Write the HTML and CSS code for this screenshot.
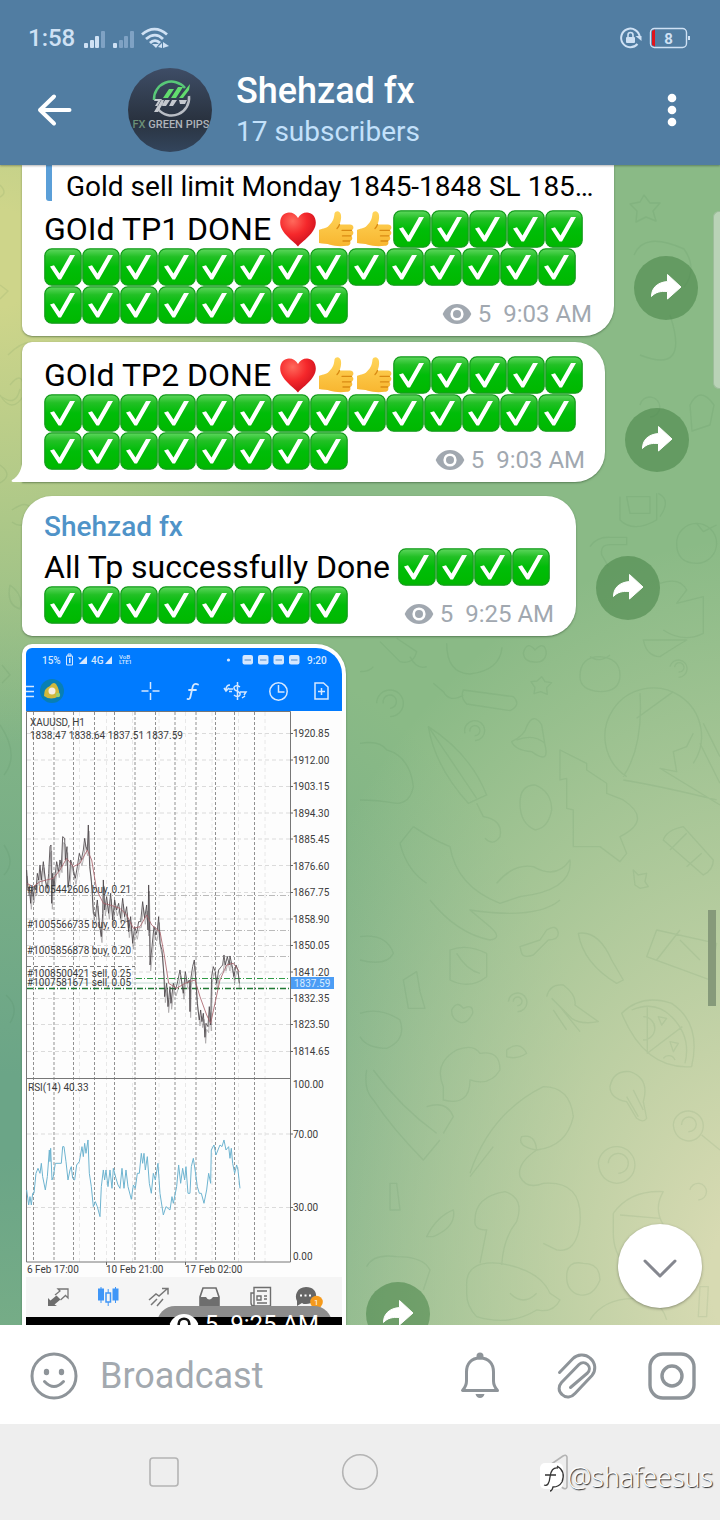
FILE: index.html
```html
<!DOCTYPE html>
<html lang="en">
<head>
    <meta charset="UTF-8">
    <meta name="viewport" content="width=device-width, initial-scale=1.0">
    <title>Shehzad fx</title>
    <link rel="stylesheet" href="styles.css">
</head>
<body>

    <!-- Shared icons -->
    <svg class="sprite" width="0" height="0" aria-hidden="true">
        <defs>
            <linearGradient id="green" x1="0" y1="0" x2="0" y2="1">
                <stop offset="0" stop-color="#5fd75f"/>
                <stop offset=".22" stop-color="#22c025"/>
                <stop offset=".5" stop-color="#00bd08"/>
                <stop offset="1" stop-color="#00b800"/>
            </linearGradient>
            <radialGradient id="red" cx=".35" cy=".25" r=".8">
                <stop offset="0" stop-color="#ff6a5c"/>
                <stop offset=".5" stop-color="#f5282b"/>
                <stop offset="1" stop-color="#c80d1c"/>
            </radialGradient>
            <linearGradient id="skin" x1="0" y1="0" x2="0" y2="1">
                <stop offset="0" stop-color="#ffd55a"/>
                <stop offset="1" stop-color="#f8b630"/>
            </linearGradient>
        </defs>
        <symbol id="emoji-check" viewBox="0 0 38 38">
            <rect x=".8" y=".8" width="36.4" height="36.4" rx="7" fill="url(#green)" stroke="#149c1c" stroke-width="1.2"/>
            <path d="M6 18.500l4-1.300 5.500 8.300L26 7h5L17 31.500h-2.500z" fill="#fff"/>
        </symbol>
        <symbol id="emoji-heart" viewBox="0 0 38 38">
            <path d="M19 36.5C15 31 1.2 23.500 1.200 12.500 1.200 6 5.500 2.500 10 2.500c4 0 7.200 2 9 5.500 1.800-3.500 5-5.500 9-5.500 4.500 0 8.800 3.500 8.800 10C36.800 23.500 23 31 19 36.500z" fill="url(#red)"/>
        </symbol>
        <symbol id="emoji-thumb" viewBox="0 0 38 38">
            <path d="M2 20c2-1.500 7-1 10-4.500 4-4 5-7 5.500-12C18.500.500 23 0 24 5c.500 3.500-.500 7-1.500 9.500H33c4 0 4.500 5 1.500 5.800 2.800 1 2.300 5-.500 5.600 2.200 1.300 1.500 4.600-1.200 5.100 1.500 1.700.500 4.700-2.800 4.800-6 .700-13 .400-17-1-3-1.500-7-1-11-1.800z" fill="url(#skin)"/>
            <path d="M34.500 20.300H25M34 25.900h-8.500M32.800 31H26M22.500 14.500c-.5 1.500-1.500 3-2.500 4" fill="none" stroke="#d98a12" stroke-width="1.300" stroke-linecap="round"/>
        </symbol>
        <symbol id="icon-eye" viewBox="0 0 30 22">
            <path d="M15 1C8 1 3 5.500.700 11 3 16.500 8 21 15 21s12-4.500 14.300-10C27 5.500 22 1 15 1z" fill="currentColor"/>
            <circle class="eye-ring" cx="15" cy="11" r="6.600"/>
            <circle cx="15" cy="11" r="4" fill="currentColor"/>
        </symbol>
        <symbol id="icon-share" viewBox="0 0 64 64">
            <path d="M47 31L33.500 18.500v7C22 26.500 17.500 33 17.500 40.500c4-4.500 9-5.500 16-5V43z" fill="#fff" stroke="#fff" stroke-linejoin="round"/>
        </symbol>
    </svg>

    <header class="header">
        <div class="status">
            <span class="status-time">1:58</span>
            <svg class="status-signal" viewBox="0 0 88 24" aria-hidden="true">
                <g fill="#cfe1f4">
                    <rect x="3" y="17" width="4" height="5" rx="1"/>
                    <rect x="9" y="14" width="4" height="8" rx="1"/>
                    <rect x="14" y="10" width="4" height="12" rx="1"/>
                    <rect x="32" y="17" width="4" height="5" rx="1"/>
                </g>
                <g fill="#7fa2c4">
                    <rect x="20" y="5" width="4" height="17" rx="1"/>
                    <rect x="38" y="14" width="4" height="8" rx="1"/>
                    <rect x="43" y="10" width="4" height="12" rx="1"/>
                    <rect x="49" y="5" width="4" height="17" rx="1"/>
                </g>
                <g fill="none" stroke="#cfe1f4" stroke-width="2.800">
                    <path d="M61 8.500c8-7 17-7 25 0M65 13c6-5 12-5 17 0M69 17c3-3 7-3 10 0"/>
                </g>
                <path d="M71 18l4 4 3-4zM77 21l4-4v5zM82 16l6 4-6 2z" fill="#cfe1f4"/>
            </svg>
            <svg class="status-battery" viewBox="0 0 72 24" aria-hidden="true">
                <path d="M19.500 18A9.300 9.300 0 1 1 21.700 11" fill="none" stroke="#cfe1f4" stroke-width="2"/>
                <path d="M17.500 10h6v5z" fill="#cfe1f4"/>
                <rect x="8" y="11" width="9" height="6" rx="1" fill="#cfe1f4"/>
                <path d="M10 12V9a2.500 2.500 0 0 1 5 0V12" fill="none" stroke="#cfe1f4" stroke-width="1.600"/>
                <rect x="32.500" y="2.500" width="36" height="19" rx="4" fill="none" stroke="#cfe1f4" stroke-width="1.400"/>
                <path d="M34 5l3-1.500v17L34 19z" fill="#e0131b"/>
                <rect x="70" y="10" width="2" height="4" fill="#cfe1f4"/>
                <text x="50.500" y="17.500" text-anchor="middle" class="battery-text">8</text>
            </svg>
        </div>
        <div class="toolbar">
            <button class="icon-btn back" aria-label="Back">
                <svg viewBox="0 0 48 48"><path d="M39.500 24H10M24 10.500L10 24l14 13.500" fill="none" stroke="#fff" stroke-width="4" stroke-linecap="round" stroke-linejoin="round"/></svg>
            </button>
            <svg class="avatar" viewBox="0 0 84 84" role="img" aria-label="Shehzad fx">
                <defs>
                    <linearGradient id="av" x1="0" y1="0" x2="0" y2="1">
                        <stop offset="0" stop-color="#3e4d66"/>
                        <stop offset=".62" stop-color="#29323f"/>
                        <stop offset="1" stop-color="#33455c"/>
                    </linearGradient>
                    <clipPath id="avc"><circle cx="42" cy="42" r="42"/></clipPath>
                </defs>
                <g clip-path="url(#avc)">
                    <rect width="84" height="84" fill="url(#av)"/>
                    <path d="M26 32a17.500 17.500 0 0 1 31-12" fill="none" stroke="#58c878" stroke-width="2.500"/>
                    <path d="M61 28a17.500 17.500 0 0 1-31 13" fill="none" stroke="#b9bdc4" stroke-width="2.500"/>
                    <path d="M35 30l6-9h5l-6 9zM43 30l7-11h5l-7 11zM51 30l11-14-1 6-6 8z" fill="#62dc6e"/>
                    <path d="M27 31h7l-4 7h-3l3-5h-4zM36 32h6l-4 6h-4zM44 32h5l-4 6h-4zM33 32l-7 12h4l7-12zM51 32h8l-2 4h-5z" fill="#c5c9cf"/>
                    <text x="43" y="60" text-anchor="middle" class="avatar-text"><tspan fill="#6b8f78">FX</tspan> GREEN PIPS</text>
                </g>
            </svg>
            <div class="title">
                <h1>Shehzad fx</h1>
                <p>17 subscribers</p>
            </div>
            <button class="icon-btn" aria-label="More options">
                <svg viewBox="0 0 48 48" fill="#fff"><circle cx="24" cy="12" r="4.300"/><circle cx="24" cy="24" r="4.300"/><circle cx="24" cy="36" r="4.300"/></svg>
            </button>
        </div>
    </header>

    <main class="chat">
        <svg class="doodles" viewBox="0 0 720 1160" preserveAspectRatio="xMinYMin slice" aria-hidden="true">
            <g transform="translate(360 325) scale(.3333)">
                <path d="M780 20v70q40 40 110 0V10M800 20h70v50h-60zM895 10q40 20 5 70M950 160a60 60 0 1 1 60 60q-60 0-60-60M1010 100l20 25 40-20M690 170q20-30 60-28h50v22h-50q-30 0-25 30l20 35M900 280q60-20 80 20l-30 40 80-20v110q-60 30-120-10M850 450q10 50 50 50 30-20 80-50z"/>
                <path d="M260 460q0 90 70 92 90-10 96-80M490 490q10-40 35-10 30-30 34 10-5 30-36 26-30 0-33-26zM660 560q0-60 60-60 60 5 60 55t-60 50q-60-5-60-45M690 500q30 20 60-5"/>
                <path d="M930 530a26 26 0 1 1 26 32M944 532a14 14 0 1 1 12 14M310 600l150 20q25 25-10 42l-130-20q-20-20-10-42zM310 615q-40 25-60-10l-30-25M545 560l10 15 20 3-15 15 2 20-20-8-20 6 3-18-12-18 18-2z"/>
                <path d="M50 640a40 40 0 1 1 40 40M70 640a20 20 0 1 1 20 15M0 545q30 0 40-15M60 455l60 60q40 10 50-30l-60-40M150 500q20 40 50 30"/>
                <path d="M205 710q20 120 120 230l55-25Q330 790 205 710zM205 710l145 215M350 940l20 40q60 10 50 60-20 30-45 5M315 730a30 30 0 1 1 30 22M330 725a15 15 0 1 1 14 12"/>
                <path d="M455 755q40-20 45-45 20-45 45-5l10 60q15 60-40 20-50-5-60-30zM470 750q50-20 85 10M600 780v90l20-5v90l20 5v110h80l60 45 20-25-20-50q100-50 10-110l-50-20v-30l-60-40v-20zM480 940q0-55 45-55 50 20 50 75-10 55-50 60-45-20-45-80z"/>
                <path d="M800 860a145 145 0 1 1 200-40M840 610q10 160-50 250M940 605l-110 80M790 870q120 20 280 60M1000 730l-20 40-40 15 10 60-50-10 180 110M1030 700l50 100M1020 760l60 120"/>
                <path d="M0 760q60-10 80 20 70 20 80 110-10 50-50 50-60-10-110-10M120 1060q20 80 80 120M160 1010l-40 50M160 1010q60 40 110 60 20 120 150 170l60-20q160-20 150-110-40 60-110 20-60-10-110 50M910 1050q10-30 60-40l90 100q0 30-30 45zM930 1080l50-50M980 1130l45-40M820 1140l15 15 25-5-5 25 10 15-25 5-15-10z"/>
            </g>
            <g transform="translate(360 735) scale(.3333)">
                <path d="M210 0q80 100 180 120 40-5 0-40l-60-50q200 30 270-30M480 140l60-20 20-30q30-20 35 10 0 20-30 20l-45 45q-30 10-35-5zM270 150q50-20 110 10v70q-50 40-110 10zM290 160q30 50 70 60M655 100q60-10 100 80l35 60-20 10q-100-60-115-150z"/>
                <path d="M890 90l180 40-20 110-190-70zM960 90l-70 90M960 120l60 60M445 305a28 28 0 1 1 28 30M460 305a13 13 0 1 1 12 12M275 330q15-30 35-5 30-15 28 15-15 30-35 28-30-10-28-38zM560 290q10-40 50-35 40 30 35 60l70 50q-50 10-80-10l-60-60M580 330l40 60M600 320l60 75"/>
                <path d="M785 340q60-60 150-30 90 60 60 190-140 10-210-160zM815 330q70-30 120 20 60 60 40 140M862 320v140l105-80M850 350a30 30 0 1 1-1 70M930 425l25 5-15 25zM895 350l25 5-15 20zM910 475a20 20 0 0 1 35 5"/>
                <path d="M0 110q80-10 100 50-20 40-100 20M130 240l40-25 10 60 15 50h-50zM0 340q60-20 120 20 20 60-40 85-60 0-80-35M20 510q-10 60 20 90 60 90 150 180l50-60M40 510q80 110 190 190M200 620q60-20 80 30l-30 50M250 560q-30-70 40-110 50-20 70 10 60-10 60 50-30 50-90 30 0 80-80 60zM440 450q40-30 60 10-30 20-60 10z"/>
                <path d="M330 820q60-180 220-260 80 0 90 90-20 90-110 100-60-10-45-40 40-10 45 40-60 40-50 80 20 40 70 20 120-10 110 120-10 90-70 80-40-20-40-20M330 830l70-90M345 960q0-70 90-85 60 20 35 90-40 50-45 130M360 1090l20-100q-40 0-35-30M320 1160q-5-80 100-70 120 20 150 90l30 20q-20 40-70 30-80 50-180 20-30-30-30-70zM450 1180q40 40 80 0"/>
                <path d="M750 560q10-50 60-45 60 20 40 90l10 50q-10 15-30 0l-30-50q-50-10-50-45zM800 590l35 60M820 570l30 60M715 790a55 55 0 1 1 55 60q-50-5-55-60M745 790a30 30 0 1 1 30 30M940 675a45 45 0 1 1 45 48q-40-5-45-48M965 675a22 22 0 1 1 20 20M1025 705l55 45M990 870a25 25 0 1 1 25 30M760 940q50-70 150-65-30 50 0 100M760 940v60q0 60 40 100M780 945l120 10M620 1130q0-50 50-40 50 0 50 50-20 50-60 45-40-10-40-55zM20 1100q20-40 90-30 80 0 100 40l-20 60M200 1010q30-60 80-80 10 50-60 80zM90 850h20l10 80H90zM690 1260q50-80 180-60 40 20 50 60M1020 1160h25l-5 90h-25z"/>
            </g>
            <path d="M0 20q8 8 0 12M0 120l8 6-8 8M8 190q18-18 30-10M10 220q14-18 14 10-12 20-24 0M2 232q14 10 18-8M0 300q14 10 0 18M12 345q20-14 20 8-10 12-20 4M10 420q14 10 10 24-14-4-10-24M2 500l8 10-8 8M0 560q20 30 4 50M4 680q12 18 0 30M6 830q14 12 4 28M644 30l6 8 10 0-7 8 3 10-10-4-10 5 1-11-7-7 10-2zM634 90q10-24 50-6 14 20 0 38M640 190q50 20 30-40M640 240a10 10 0 1 1 10 12M690 240q10-20 24 0l-4 20-18 6z"/>
        </svg>

        <section class="messages">
            <div class="row">
                <article class="bubble bubble-cut">
                    <blockquote class="quote">Gold sell limit Monday 1845-1848 SL 185…</blockquote>
                    <div class="body">
                        <p class="text">GOId TP1 DONE ❤👍👍✅✅✅✅✅✅✅✅✅✅✅✅✅✅✅✅✅✅✅✅✅✅✅✅✅✅✅</p>
                        <div class="meta"><svg><use href="#icon-eye"/></svg><span>5</span><time>9:03 AM</time></div>
                    </div>
                </article>
                <button class="share" aria-label="Share"><svg><use href="#icon-share"/></svg></button>
            </div>

            <div class="row row-last">
                <article class="bubble bubble-tail">
                    <div class="body">
                        <p class="text">GOId TP2 DONE ❤👍👍✅✅✅✅✅✅✅✅✅✅✅✅✅✅✅✅✅✅✅✅✅✅✅✅✅✅✅</p>
                        <div class="meta"><svg><use href="#icon-eye"/></svg><span>5</span><time>9:03 AM</time></div>
                    </div>
                    <svg class="tail" viewBox="0 0 12 26" aria-hidden="true"><path d="M12 0C11 14 8 20 1 24c-1 1 0 2 1 2h10z" fill="#fff"/></svg>
                </article>
                <button class="share" aria-label="Share"><svg><use href="#icon-share"/></svg></button>
            </div>

            <div class="row">
                <article class="bubble bubble-first">
                    <h2 class="name">Shehzad fx</h2>
                    <div class="body">
                        <p class="text">All Tp successfully Done ✅✅✅✅✅✅✅✅✅✅✅✅</p>
                        <div class="meta"><svg><use href="#icon-eye"/></svg><span>5</span><time>9:25 AM</time></div>
                    </div>
                </article>
                <button class="share" aria-label="Share"><svg><use href="#icon-share"/></svg></button>
            </div>

            <div class="row">
                <article class="bubble bubble-photo">
                    <svg class="photo" viewBox="26 648 316 710" role="img" aria-label="XAUUSD chart">
                        <rect x="26" y="648" width="316" height="710" fill="#fdfdfd"/>
                        <rect x="26" y="648" width="316" height="63" fill="#007bff"/>
                        <g class="p-status">
                            <text x="42" y="664">15%</text>
                            <text x="91" y="664">4G</text>
                            <text x="307" y="664">9:20</text>
                            <text x="119" y="659" class="p-tiny">VoB</text>
                            <text x="119" y="664" class="p-tiny">LTE1</text>
                        </g>
                        <g fill="#d5e8ff">
                            <path d="M66.500 656h6v9h-6zM68 654h3v2h-3z" fill="none" stroke="#d5e8ff"/>
                            <path d="M69 658h1.500v5H69zM87 656v8h-8zM82 658l-4-1 2 3zM112 656v8h-7z"/>
                            <circle cx="228.500" cy="660" r="1.600"/>
                            <rect x="242.500" y="655" width="10.500" height="9.500" rx="2"/>
                            <rect x="258" y="655" width="10.500" height="9.500" rx="2"/>
                            <rect x="273.500" y="655" width="10.500" height="9.500" rx="2"/>
                            <rect x="289" y="655" width="10.500" height="9.500" rx="2"/>
                            <path d="M244.500 660h6.500M260 660h6.500M275.500 660h6.500M291 660h6.500" stroke="#7fa9dc" stroke-width="1.500"/>
                        </g>
                        <g fill="none" stroke="#d5e8ff" stroke-width="1.500">
                            <path d="M26 686.500h8M26 691.500h8M26 696.500h8M150.500 682v7M150.500 693v7M141.500 691h7M152.500 691h7"/>
                            <circle cx="278.500" cy="691.500" r="8.700"/>
                            <path d="M278.500 685v7h6M315 683h8.500l4.500 4v12h-13zM321.500 688v7M318 691.500h7"/>
                        </g>
                        <circle cx="52" cy="691" r="12" fill="#087fb4"/>
                        <path d="M44 696q0-8 6-10 3-5 6-2 4 6 3 12-8 5-15 0z" fill="#d0b83c"/>
                        <circle cx="52" cy="691" r="3.500" fill="#f6eee2"/>
                        <circle cx="58" cy="695" r="2.200" fill="#9ccf6f"/>
                        <path d="M198 684.500c-3-1.500-5 0-5.500 3l-2 9c-.5 2.500-1.500 3-3 2.500M189 690h7" fill="none" stroke="#d5e8ff" stroke-width="1.800" stroke-linecap="round"/>
                        <path d="M230 685c-3 0-4 2-4 5M224 688l2 3 3-3M229 689h4M229 691.500h3M240 687c-4-3-8 0-5 3 2 2 6 1 5 5-1 2-4 2-6 0M237.500 682v18M240 692h6l-2 3M242 698l3-2" fill="none" stroke="#d5e8ff" stroke-width="1.500"/>

                        <!-- Grid -->
                        <g fill="none" stroke="#d2d2d2" stroke-width=".8" stroke-dasharray="4 3">
                            <path d="M27 733.500h263M27 760h263M27 786.500h263M27 813h263M27 839h263M27 865.500h263M27 892.500h263M27 919h263M27 945.500h263M27 972h263M27 998.500h263M27 1024.500h263M27 1051.500h263M27 1134h263M27 1207.500h263"/>
                            <path d="M79.500 712v550M106.500 712v550M132.500 712v550M159 712v550M185.500 712v550M212 712v550M238.500 712v550M265 712v550" stroke="#e2e2e2"/>
                        </g>
                        <path d="M33.500 712v550M54 712v550M73.500 712v550M94.500 712v550M114.500 712v550M135 712v550M155.500 712v550M175 712v550M196 712v550M215.500 712v550M234.500 712v550M254.500 712v550" fill="none" stroke="#919191" stroke-dasharray="3 2"/>
                        <path d="M26.500 711.500h264V1262h-264zM26 1078.500h265" fill="none" stroke="#777"/>
                        <path d="M290 733.500h3M290 760h3M290 786.500h3M290 813h3M290 839h3M290 865.500h3M290 892.500h3M290 919h3M290 945.500h3M290 972h3M290 998.500h3M290 1024.500h3M290 1051.500h3M290 1134h3M290 1207.500h3M106.500 1262v3M185.500 1262v3" fill="none" stroke="#666"/>
                        <path d="M27 895.500h263M27 930.500h263M27 956.500h263" fill="none" stroke="#aaa" stroke-width=".8" stroke-dasharray="6 2 1 2"/>
                        <path d="M27 966.500h108" fill="none" stroke="#777" stroke-dasharray="4 3"/>
                        <path d="M27 983h263" stroke="#b4d0c8" stroke-width=".8"/>
                        <path d="M136 978.500h154" fill="none" stroke="#2f9a45" stroke-dasharray="6 2 1 2"/>
                        <path d="M27 988.500h263" fill="none" stroke="#1e7a33" stroke-width="1.300" stroke-dasharray="6 2 1 2"/>

                        <!-- Price -->
                        <g transform="translate(0 700) scale(.3333)" fill="none" stroke-linejoin="round">
                            <polyline id="price" stroke="#4c4649" stroke-width="3" opacity=".85" points="80,510 84,570 88,560 92,610 96,560 100,590 104,560 108,570 112,520 116,540 120,495 124,540 130,485 136,540 142,565 146,520 150,440 153,435 155,610 158,520 162,560 166,520 170,485 176,515 180,480 184,500 188,410 194,415 196,480 201,440 204,560 208,540 212,480 218,500 226,535 232,500 238,460 244,480 250,450 254,415 258,440 262,450 265,375 269,500 273,530 276,570 280,640 286,650 292,600 298,670 304,710 308,640 310,540 314,630 320,590 326,640 332,580 338,660 344,600 350,630 356,610 362,655 368,595 374,650 380,620 386,695 392,650 398,730 404,680 410,700 416,665 422,665 428,605 434,655 440,615 444,690 446,555 449,700 450,795 456,740 462,680 468,705 472,690 476,650 480,730 486,750 492,830 494,890 500,850 504,920 510,860 513,910 520,850 526,870 532,850 540,810 546,850 550,880 556,815 562,850 568,840 570,935 572,840 578,800 583,780 588,850 592,910 598,960 602,930 606,965 610,940 615,1012 618,970 624,980 628,920 632,975 634,870 635,830 640,800 646,815 650,850 656,810 664,800 668,795 672,765 676,795 682,770 688,795 690,768 698,805 702,830 708,795 714,810 718,850"/>
                            <use href="#price" x="2" y="18" opacity=".45"/>
                            <polyline stroke="#a8626a" stroke-width="2.500" points="80,550 100,560 120,545 160,535 180,510 200,475 220,500 240,490 262,450 275,480 290,570 310,610 330,615 360,625 380,645 400,685 420,680 440,645 455,675 480,695 492,760 506,850 530,865 555,850 585,840 600,890 620,945 632,970 645,910 660,840 680,795 700,790 718,815"/>
                        </g>
                        <!-- RSI -->
                        <polyline transform="translate(0 980) scale(.3333)" fill="none" stroke="#6db4d0" stroke-width="3" points="80,630 86,675 90,650 94,675 98,640 102,640 108,580 114,565 120,580 124,550 128,590 136,630 142,590 148,510 150,545 152,505 156,600 160,590 166,550 184,550 188,500 192,500 198,545 204,600 210,570 214,560 218,595 224,600 230,555 238,545 246,500 250,530 254,490 258,520 264,480 268,580 274,620 280,680 286,665 292,680 300,710 304,620 310,570 314,600 318,570 324,620 330,570 336,625 340,565 348,595 354,615 360,625 366,565 372,625 378,570 384,620 394,658 400,615 406,625 412,580 418,580 424,520 428,550 432,520 436,570 442,530 448,610 454,640 460,580 466,600 474,550 480,640 490,705 498,680 510,690 516,650 520,670 530,620 536,555 542,610 548,565 554,600 558,560 564,640 570,640 574,560 580,535 586,575 592,620 598,640 604,640 612,670 620,630 626,580 632,610 634,510 642,495 648,525 654,510 660,495 666,500 672,480 678,510 686,500 690,535 694,505 698,550 704,580 710,555 714,570 720,625"/>

                        <g class="p-label">
                            <text x="30" y="726">XAUUSD, H1</text>
                            <text x="30" y="739">1838.47 1838.64 1837.51 1837.59</text>
                            <text x="27" y="893">#1005442606 buy, 0.21</text>
                            <text x="27" y="928">#1005566735 buy, 0.21</text>
                            <text x="27" y="954">#1005856878 buy, 0.20</text>
                            <text x="27" y="986">#1007581671 sell, 0.05</text>
                            <text x="27" y="977">#1008500421 sell, 0.25</text>
                            <text x="28" y="1091">RSI(14) 40.33</text>
                            <text x="27" y="1273">6 Feb 17:00</text>
                            <text x="106" y="1273">10 Feb 21:00</text>
                            <text x="185" y="1273">17 Feb 02:00</text>
                            <text x="293" y="737">1920.85</text>
                            <text x="293" y="764">1912.00</text>
                            <text x="293" y="790">1903.15</text>
                            <text x="293" y="817">1894.30</text>
                            <text x="293" y="843">1885.45</text>
                            <text x="293" y="870">1876.60</text>
                            <text x="293" y="896">1867.75</text>
                            <text x="293" y="923">1858.90</text>
                            <text x="293" y="949">1850.05</text>
                            <text x="293" y="976">1841.20</text>
                            <text x="293" y="1002">1832.35</text>
                            <text x="293" y="1028">1823.50</text>
                            <text x="293" y="1055">1814.65</text>
                            <text x="293" y="1088">100.00</text>
                            <text x="293" y="1138">70.00</text>
                            <text x="293" y="1211">30.00</text>
                            <text x="293" y="1260">0.00</text>
                        </g>
                        <rect x="291" y="977" width="43" height="12" fill="#4c9df5"/>
                        <text x="294" y="987" class="p-price">1837.59</text>

                        <!-- Bottom tabs -->
                        <rect x="26" y="1277" width="316" height="40" fill="#f5f5f5"/>
                        <path d="M48 1306v-8l2.500 2.500 6-5 4 4-6 5 2.500 1.500z" fill="#6e6e6e"/>
                        <path d="M55 1295l5-4-2-2h10v9l-2.500-2.500-5 4.500" fill="none" stroke="#777" stroke-width="1.300"/>
                        <g stroke="#3f96f7" fill="#3f96f7">
                            <path d="M101 1287v16M115.500 1287v16M108.200 1289v17"/>
                            <rect x="98.500" y="1289" width="5" height="11"/>
                            <rect x="113" y="1289" width="5" height="11"/>
                            <rect x="106" y="1293" width="4.500" height="9" fill="#f5f5f5" stroke-width="1.500"/>
                        </g>
                        <path d="M149 1300l7-6 3 2 8-7M162 1288.500h6v6M151 1305l6-6M157 1306l6-7" fill="none" stroke="#777" stroke-width="1.500"/>
                        <path d="M203 1288h13l3 9v9h-19v-9z" fill="none" stroke="#6e6e6e" stroke-width="1.600"/>
                        <path d="M200 1297h6q3 5 7 0h6v9h-19z" fill="#6e6e6e"/>
                        <path d="M254 1287.500h16.500V1306H254zM254 1293h-3v10q0 3 3 3M257 1291h10M257 1296h4v4h-4zM264 1296h3M264 1299h3M257 1303h10" fill="none" stroke="#6e6e6e" stroke-width="1.400"/>
                        <path d="M306 1287c14 0 13 17 0 17-2 0-3 0-4-1l-5 3v-5c-3-5 0-14 9-14z" fill="#666"/>
                        <path d="M300 1295.500h2M304.500 1295.500h2M309 1295.500h2" stroke="#fff" stroke-width="2"/>
                        <circle cx="316.500" cy="1302" r="6.300" fill="#f59a1c"/>
                        <text x="314" y="1305" class="p-count">1</text>
                        <rect x="26" y="1317" width="316" height="41" fill="#000"/>
                    </svg>
                    <div class="meta badge"><svg><use href="#icon-eye"/></svg><span>5</span><time>9:25 AM</time></div>
                </article>
                <button class="share" aria-label="Share"><svg><use href="#icon-share"/></svg></button>
            </div>
        </section>

        <div class="edge-handle"></div>
        <div class="scroll-thumb"></div>
        <button class="to-bottom" aria-label="Scroll to bottom">
            <svg viewBox="0 0 84 84"><path d="M27 37l15 15 15-15" fill="none" stroke="#85878f" stroke-width="3" stroke-linecap="round" stroke-linejoin="round"/></svg>
        </button>
    </main>

    <form class="composer">
        <button type="button" class="icon-btn" aria-label="Emoji">
            <svg viewBox="0 0 48 48"><circle cx="24" cy="24" r="22" fill="none" stroke="#8e9499" stroke-width="3"/><ellipse cx="16.500" cy="20" rx="2.700" ry="3.200" fill="#8e9499"/><ellipse cx="31.500" cy="20" rx="2.700" ry="3.200" fill="#8e9499"/><path d="M14.500 29.500q9.500 10 19 0" fill="none" stroke="#8e9499" stroke-width="3" stroke-linecap="round"/></svg>
        </button>
        <input type="text" class="composer-input" placeholder="Broadcast" aria-label="Broadcast">
        <button type="button" class="icon-btn" aria-label="Notifications">
            <svg viewBox="0 0 48 48" fill="none" stroke="#8e9499" stroke-width="3" stroke-linejoin="round"><path d="M24 6C15 6 10.500 12 10.500 20v9q0 5-4 9.500h35q-4-4.500-4-9.500v-9C37.500 12 33 6 24 6z"/><circle cx="24" cy="4" r="2" fill="#8e9499"/><path d="M19.500 42h9q-1 4-4.500 4t-4.500-4z" fill="#8e9499" stroke="none"/></svg>
        </button>
        <button type="button" class="icon-btn" aria-label="Attach">
            <svg viewBox="0 0 48 48" fill="none" stroke="#8e9499" stroke-width="3" stroke-linecap="round" stroke-linejoin="round"><path d="M7.500 20.500L21 6.500c4-4 12-5 17-.5 6 5 6 13 2 17.500L23 41.500c-3.500 4-9 5-13 1-4-3.500-3.500-8.500-.5-12L27 12.500c2.500-2.500 6-2.500 8.500 0s2.500 6 0 8.500L18.500 35.500"/></svg>
        </button>
        <button type="button" class="icon-btn" aria-label="Camera">
            <svg viewBox="0 0 48 48" fill="none" stroke="#8e9499" stroke-width="3.400"><rect x="2" y="2" width="44" height="44" rx="13"/><circle cx="24" cy="24" r="10"/></svg>
        </button>
    </form>

    <nav class="navbar">
        <button class="nav-btn" aria-label="Recents"><svg viewBox="0 0 40 40"><rect x="6" y="6" width="28" height="28" rx="3"/></svg></button>
        <button class="nav-btn" aria-label="Home"><svg viewBox="0 0 40 40"><circle cx="20" cy="20" r="17.300"/></svg></button>
        <button class="nav-btn" aria-label="Back"><svg viewBox="0 0 40 40"><path d="M31 5v30q-1 3-4 1L8 23q-3-3 0-6L27 4q3-2 4 1z"/></svg></button>
        <div class="watermark">
            <svg viewBox="0 0 28 32" aria-hidden="true">
                <rect x="1" y="2" width="23" height="26" rx="5" fill="#fff"/>
                <path d="M5 24q5 2 6-8t8-9M6 14h11M18 5q9 5 5 16-3 5-9 5-1 4-3 4" fill="none" stroke="#333" stroke-width="1.300"/>
            </svg>
            <span>@shafeesus</span>
        </div>
    </nav>

    <script src="script.js"></script>
</body>
</html>
```

FILE: styles.css
```css
:root {
    --blue: #517da2;
    --pale: #cfe1f4;
    --grey: #a1a8b0;
    --emoji: 38px;
}

* {
    box-sizing: border-box;
}

body {
    margin: 0;
    height: 100vh;
    display: flex;
    flex-direction: column;
    overflow: hidden;
    font-family: Roboto, "Liberation Sans", sans-serif;
    color: #000;
    background-color: #fff;
}

button {
    padding: 0;
    border: 0;
    background: none;
}

svg {
    display: block;
}

.sprite {
    position: absolute;
}

h1, h2, p, blockquote {
    margin: 0;
    font-weight: 400;
}

.icon-btn {
    flex: none;
    width: 48px;
    height: 48px;
}

/* Header */
.header {
    flex: none;
    background-color: var(--blue);
    position: relative;
    z-index: 2;
    box-shadow: 0 1px 2px rgba(0, 0, 0, 0.3);
}

.status {
    display: flex;
    align-items: center;
    height: 56px;
    padding: 20px 30px 0 28px;
    color: var(--pale);
}

.status-time {
    font-size: 24px;
    font-weight: 500;
}

.status-signal {
    width: 88px;
    height: 24px;
    margin-left: 6px;
}

.status-battery {
    width: 72px;
    height: 24px;
    margin-left: auto;
}

.battery-text {
    font-size: 15px;
    font-weight: 700;
    fill: var(--pale);
}

.toolbar {
    display: flex;
    align-items: center;
    height: 109px;
    padding: 0 24px 2px 30px;
}

.avatar {
    flex: none;
    width: 84px;
    height: 84px;
    margin: 0 24px 0 50px;
}

.avatar-text {
    font-size: 11px;
    font-weight: 500;
    fill: #aeb3ba;
}

.title {
    flex: 1;
    padding-top: 2px;
}

.title h1 {
    font-size: 36px;
    line-height: 42px;
    font-weight: 500;
    color: #fff;
}

.title p {
    font-size: 28px;
    line-height: 40px;
    color: #c3e1fb;
}

/* Chat */
.chat {
    flex: 1;
    min-height: 0;
    position: relative;
    overflow: hidden;
    background:
        radial-gradient(ellipse 50% 42% at 0% 8%, #ced58a 10%, rgba(206, 213, 138, 0) 100%),
        radial-gradient(ellipse 74% 64% at 106% 96%, #d7dab2 10%, rgba(213, 218, 176, 0) 100%),
        radial-gradient(ellipse 82% 46% at 0% 82%, #6ba587 8%, rgba(124, 178, 150, 0) 100%),
        #8aba86;
}

.doodles {
    position: absolute;
    inset: 0;
    width: 100%;
    height: 100%;
    fill: none;
    stroke: rgba(50, 110, 70, 0.09);
    stroke-width: 4;
    stroke-linejoin: round;
}

.doodles > path {
    stroke-width: 1.4;
}

.messages {
    position: relative;
    display: flex;
    flex-direction: column;
    padding-left: 22px;
}

.row {
    display: flex;
    align-items: flex-end;
    gap: 20px;
    margin-bottom: 8px;
}

.row:first-child {
    margin-bottom: 6px;
}

.row-last {
    margin-bottom: 14px;
}

.bubble {
    position: relative;
    padding: 14px 22px 12px;
    max-width: 592px;
    background-color: #fff;
    border-radius: 10px 30px 30px 10px;
    box-shadow: 0 1px 2px rgba(40, 70, 40, 0.5);
}

.bubble-cut {
    padding-top: 0;
    border-top-left-radius: 0;
    border-top-right-radius: 0;
}

.bubble-tail {
    max-width: 583px;
    padding-right: 20px;
    border-bottom-left-radius: 0;
}

.bubble-first {
    max-width: 554px;
    border-top-left-radius: 30px;
}

.quote {
    margin: 0 -8px 9px 2px;
    padding: 4px 0 0 14px;
    border-left: 6px solid #5b9fd8;
    border-radius: 0 0 0 3px;
    font-size: 28px;
    line-height: 36px;
    height: 36px;
    white-space: nowrap;
}

.name {
    font-size: 28px;
    line-height: 34px;
    padding-bottom: 4px;
    font-weight: 500;
    color: #4f93c8;
}

/* Text and time share one cell, the time sits in the last line */
.body {
    display: grid;
}

.text,
.body .meta {
    grid-area: 1 / 1;
}

.text {
    font-size: 32px;
    line-height: 38px;
}

.emoji {
    display: inline-block;
    width: var(--emoji);
    height: var(--emoji);
    vertical-align: top;
}

.meta {
    align-self: end;
    justify-self: end;
    display: flex;
    align-items: center;
    font-size: 24px;
    line-height: 24px;
    color: var(--grey);
}

.body .meta {
    margin-bottom: -2px;
}

.meta svg {
    width: 30px;
    height: 22px;
    margin-right: 6px;
}

.meta time {
    margin-left: 12px;
}

.eye-ring {
    fill: var(--eye-ring, #fff);
}

.tail {
    position: absolute;
    left: -11px;
    bottom: 0;
    width: 12px;
    height: 26px;
}

.bubble-photo {
    flex: none;
    width: 324px;
    padding: 4px;
    border-radius: 10px 30px 10px 10px;
}

.photo {
    width: 100%;
    border-radius: 6px 26px 6px 6px;
}

.p-status {
    font-size: 10px;
    font-weight: 500;
    fill: #d5e8ff;
}

.p-tiny {
    font-size: 6px;
}

.p-label {
    font-size: 10px;
    fill: #3c3c3c;
}

.p-price {
    font-size: 10px;
    fill: #d8ecff;
}

.p-count {
    font-size: 8px;
    fill: #fff;
}

.badge {
    --eye-ring: #111;
    position: absolute;
    right: 14px;
    bottom: 20px;
    height: 36px;
    padding: 0 13px 0 12px;
    border-radius: 18px;
    color: #fff;
    background: linear-gradient(#8c8c8c 11px, #000 11px);
}

.share {
    flex: none;
    width: 64px;
    height: 64px;
    margin-bottom: 16px;
    border-radius: 50%;
    background-color: rgba(70, 130, 70, 0.55);
}

.row-last .share {
    margin-bottom: 10px;
}

.share svg {
    width: 64px;
    height: 64px;
}

/* Floating controls */
.edge-handle {
    position: absolute;
    right: 0;
    top: 46px;
    width: 7px;
    height: 178px;
    border-radius: 6px 0 0 6px;
    background-color: #b9d3b7;
    border: 1px solid #9dbd9b;
    border-right: 0;
}

.scroll-thumb {
    position: absolute;
    right: 4px;
    top: 745px;
    width: 8px;
    height: 96px;
    background-color: #869a7a;
}

.to-bottom {
    position: absolute;
    right: 18px;
    bottom: 17px;
    width: 84px;
    height: 84px;
    border-radius: 50%;
    background-color: #fff;
    box-shadow: 0 1px 3px rgba(0, 0, 0, 0.35);
}

/* Composer */
.composer {
    flex: none;
    display: flex;
    align-items: center;
    gap: 48px;
    height: 99px;
    padding: 2px 24px 0 30px;
    background-color: #fff;
}

.composer-input {
    flex: 1;
    min-width: 0;
    margin-left: -26px;
    padding: 0;
    border: 0;
    outline: 0;
    font: 36px Roboto, "Liberation Sans", sans-serif;
}

.composer-input::placeholder {
    color: #a3a9af;
    opacity: 1;
}

/* System navigation */
.navbar {
    flex: none;
    position: relative;
    display: flex;
    justify-content: center;
    align-items: center;
    gap: 156px;
    height: 96px;
    background-color: #eee;
}

.nav-btn svg {
    width: 40px;
    height: 40px;
    fill: none;
    stroke: #b4b4b4;
    stroke-width: 1.6;
}

.watermark {
    position: absolute;
    right: 7px;
    bottom: 26px;
    display: flex;
    align-items: center;
    font: 300 27px/34px "Open Sans", "Noto Sans", sans-serif;
    color: #fff;
    text-shadow: 1px 1px 1px #222;
}

.watermark svg {
    width: 28px;
    height: 32px;
}
```

FILE: script.js
```js
// Swap emoji characters for the drawn ones, so they look the same everywhere
const emojiIcons = {
    '✅': 'emoji-check',
    '❤': 'emoji-heart',
    '👍': 'emoji-thumb'
};

document.querySelectorAll('.text').forEach(el => {
    el.innerHTML = el.innerHTML.replace(/✅|❤|👍/gu, char =>
        `<svg class="emoji" role="img" aria-label="${char}"><use href="#${emojiIcons[char]}"/></svg>`
    );
});
```
